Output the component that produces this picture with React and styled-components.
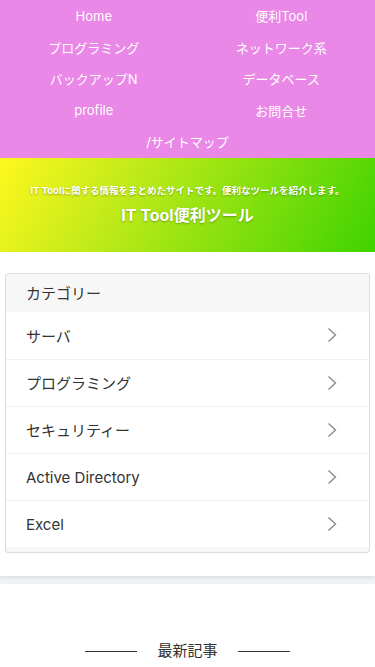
import styled, { createGlobalStyle } from 'styled-components';

const GlobalStyle = createGlobalStyle`
  body {
    margin: 0;
    background: #f1f2f4;
    font-family: Inter, "Noto Sans CJK JP", sans-serif;
    color: #333;
  }
`;

const Nav = styled.nav`
  display: grid;
  grid-template-columns: 1fr 1fr;
  background: #e988e6;
`;

const NavItem = styled.a`
  display: flex;
  align-items: center;
  justify-content: center;
  height: 31.5px;
  font-size: 13px;
  color: #fff;
  text-decoration: none;
  grid-column: ${(p) => (p.wide ? '1 / span 2' : 'auto')};
`;

const Hero = styled.header`
  display: flex;
  flex-direction: column;
  align-items: center;
  gap: 5px;
  padding: 25px 10px 26px;
  background: linear-gradient(120deg, #fff71f 0%, #b3e817 40%, #3fd300 100%);
  color: #fff;
  text-shadow: 0 1px 2px rgba(0, 0, 0, 0.3);
  text-align: center;
`;

const Lead = styled.p`
  margin: 0;
  font-size: 9.5px;
  font-weight: 700;
  line-height: 16px;
  height: 16px;
  white-space: nowrap;
`;

const Title = styled.h1`
  margin: 0;
  font-size: 16px;
  font-weight: 700;
  line-height: 22px;
  height: 22px;
`;

const Main = styled.section`
  background: #fff;
  padding: 21px 5px 23px;
  box-shadow: 0 2px 3px rgba(0, 0, 0, 0.08);
  margin-bottom: 8px;
`;

const Card = styled.div`
  border: 1px solid #dcdcdc;
  border-radius: 3px;
  overflow: hidden;
  padding-bottom: 5px;
  background: #f7f7f8;
`;

const CardHead = styled.div`
  height: 38px;
  display: flex;
  align-items: center;
  padding-left: 20px;
  font-size: 15px;
  background: #f7f7f8;
`;

const List = styled.ul`
  margin: 0;
  padding: 0;
  list-style: none;
  background: #fff;
`;

const Row = styled.li`
  height: 47.2px;
  box-sizing: border-box;
  display: flex;
  align-items: center;
  justify-content: space-between;
  padding: 0 32px 0 20px;
  font-size: 15px;
  color: #333;
  & + & {
    border-top: 1px solid #f1f1f1;
  }
`;

const Chevron = () => (
  <svg width="10" height="16" viewBox="0 0 10 16" fill="none">
    <polyline points="1.5,1.5 8.5,8 1.5,14.5" stroke="#8c8c8c" strokeWidth="1.4" />
  </svg>
);

const Footer = styled.section`
  background: #fff;
  padding: 56px 0 20px;
  min-height: 120px;
`;

const SectionTitle = styled.h2`
  margin: 0;
  display: flex;
  align-items: center;
  justify-content: center;
  gap: 20px;
  font-size: 15px;
  line-height: 22px;
  font-weight: 400;
  color: #333;
  &::before,
  &::after {
    content: '';
    width: 52px;
    height: 1px;
    background: #333;
  }
`;

const navItems = [
  'Home',
  '便利Tool',
  'プログラミング',
  'ネットワーク系',
  'バックアップN',
  'データベース',
  'profile',
  'お問合せ',
];

const categories = ['サーバ', 'プログラミング', 'セキュリティー', 'Active Directory', 'Excel'];

const App = () => (
  <>
    <GlobalStyle />
    <Nav>
      {navItems.map((n) => (
        <NavItem key={n}>{n}</NavItem>
      ))}
      <NavItem wide>/サイトマップ</NavItem>
    </Nav>
    <Hero>
      <Lead>IT Toolに関する情報をまとめたサイトです。便利なツールを紹介します。</Lead>
      <Title>IT Tool便利ツール</Title>
    </Hero>
    <Main>
      <Card>
        <CardHead>カテゴリー</CardHead>
        <List>
          {categories.map((c) => (
            <Row key={c}>
              {c}
              <Chevron />
            </Row>
          ))}
        </List>
      </Card>
    </Main>
    <Footer>
      <SectionTitle>最新記事</SectionTitle>
    </Footer>
  </>
);

export default App;
